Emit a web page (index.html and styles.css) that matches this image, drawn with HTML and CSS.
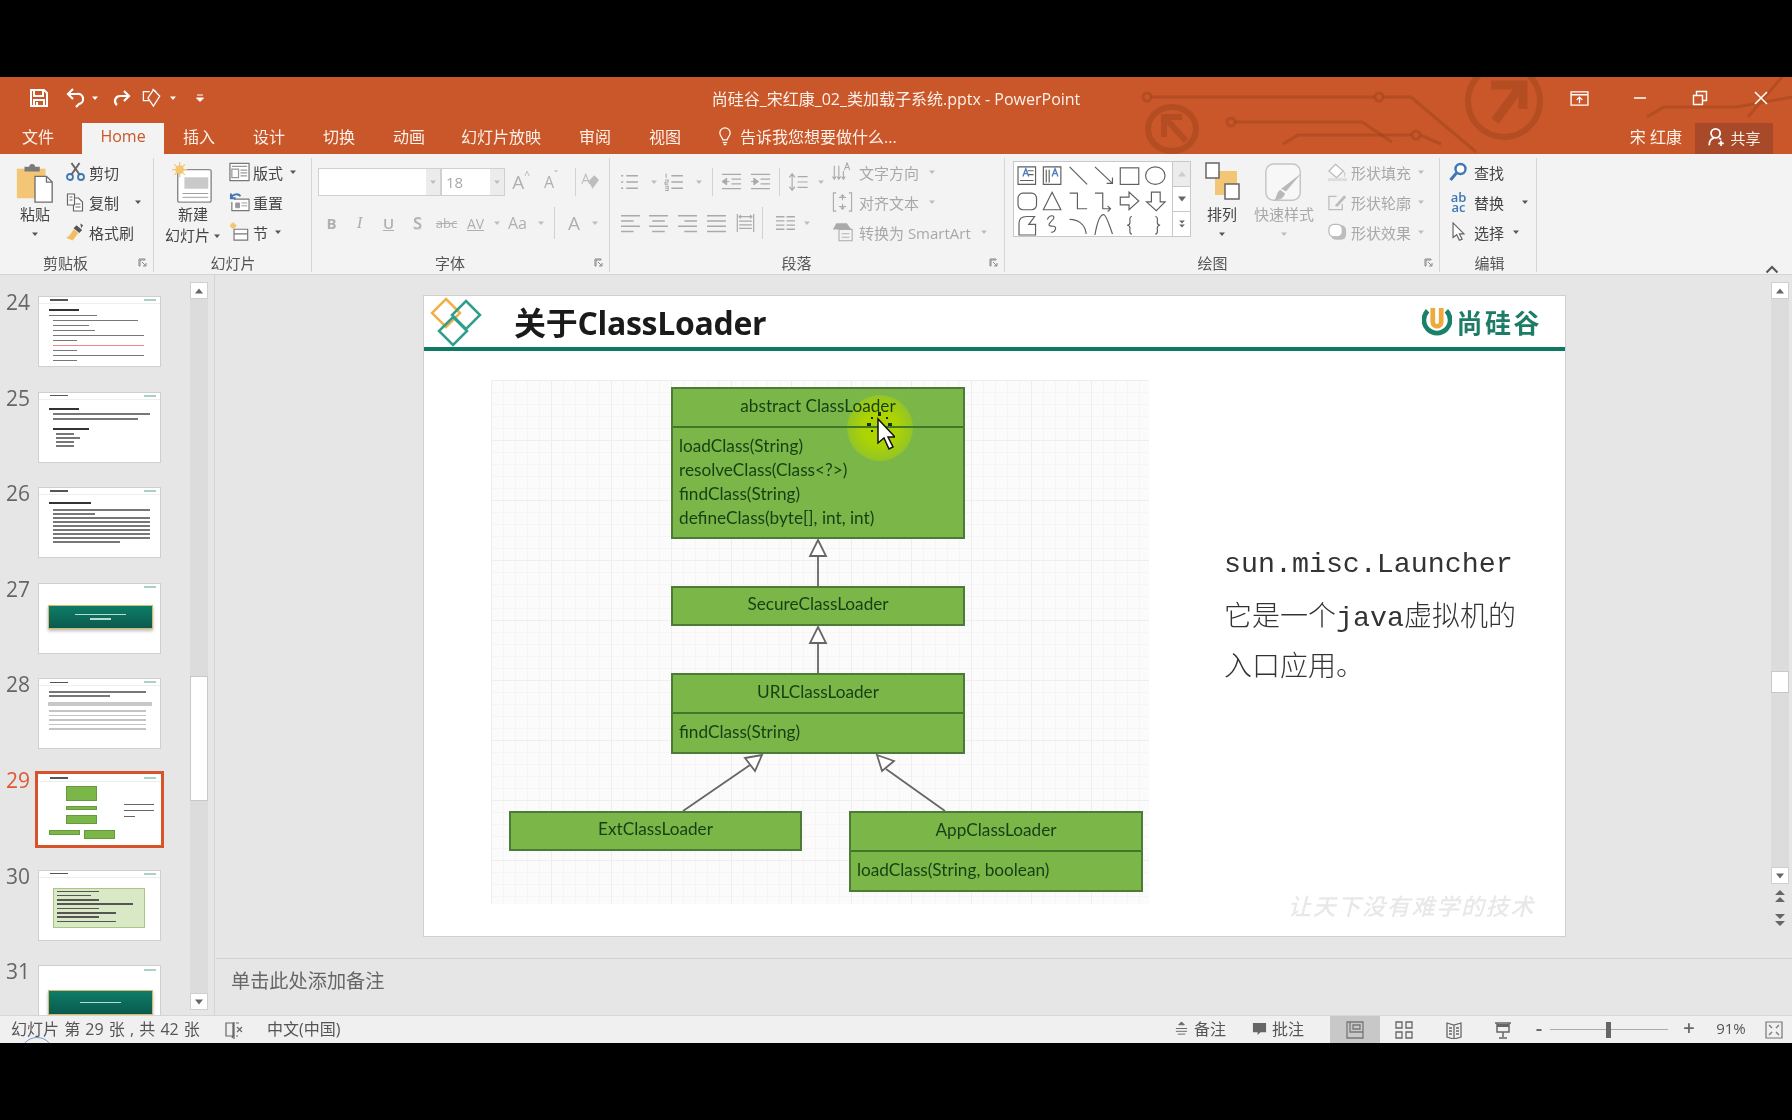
FILE: index.html
```html
<!DOCTYPE html>
<html lang="zh-CN">
<head>
<meta charset="utf-8">
<title>PowerPoint</title>
<link rel="stylesheet" href="styles.css">
</head>
<body>
<svg class="sprite" width="0" height="0">
  <defs>
    <symbol id="caret" viewBox="0 0 8 8"><path d="M1 2.5h6L4 6z" fill="currentColor"/></symbol>
    <symbol id="launch" viewBox="0 0 10 10"><path d="M1 1h6v1H2v6H1zM4 4l4 4M8 5v3H5" fill="none" stroke="currentColor"/></symbol>
    <symbol id="save" viewBox="0 0 20 20"><path d="M2 2h13l3 3v13H2zM5 2v6h9V2M5 18v-6h10v6M8 14v4" fill="none" stroke="currentColor" stroke-width="2"/></symbol>
    <symbol id="undo" viewBox="0 0 20 20"><path d="M7 1L2 6l5 5M3 6h8a5 5 0 0 1 2 10l-3 3" fill="none" stroke="currentColor" stroke-width="2.2"/></symbol>
    <symbol id="redo" viewBox="0 0 20 20"><path d="M13 3l5 5-5 5M17 8H9a5 5 0 0 0-3 9" fill="none" stroke="currentColor" stroke-width="2.2"/></symbol>
    <symbol id="touch" viewBox="0 0 24 22"><path d="M9 4H2v10h6M13 2l7 7-7 11-6-9zM12 1l4 3" fill="none" stroke="currentColor" stroke-width="1.4"/></symbol>
    <symbol id="custom" viewBox="0 0 10 10"><path d="M2 2h6M1.5 5h7L5 8.5z" fill="currentColor" stroke="currentColor"/></symbol>
    <symbol id="wdisplay" viewBox="0 0 20 16"><path d="M1 1h18v14H1zM1 4h18M10 13V7M7 9.500l3-3 3 3" fill="none" stroke="currentColor" stroke-width="1.400"/></symbol>
    <symbol id="wmin" viewBox="0 0 16 16"><path d="M2 8h12" stroke="currentColor" stroke-width="1.500"/></symbol>
    <symbol id="wrestore" viewBox="0 0 16 16"><path d="M1.500 5.500h9v9h-9zM4.500 5.500v-4h10v9h-4" fill="none" stroke="currentColor" stroke-width="1.400"/></symbol>
    <symbol id="wclose" viewBox="0 0 16 16"><path d="M2 2l12 12M14 2L2 14" stroke="currentColor" stroke-width="1.500"/></symbol>
    <symbol id="user" viewBox="0 0 20 22"><circle cx="9" cy="7" r="5" fill="none" stroke="currentColor" stroke-width="2"/><path d="M2 20c0-4 2-7 5-8M13 12l2 2M15 15v6M12 18h6" fill="none" stroke="currentColor" stroke-width="2"/></symbol>
    <symbol id="bulb" viewBox="0 0 16 22"><path d="M5.500 15c0-3-3.500-4-3.500-8a6 6 0 0 1 12 0c0 4-3.500 5-3.500 8zM5.500 18h5M6.500 20.500h3" fill="none" stroke="currentColor" stroke-width="1.400"/></symbol>
    <symbol id="paste" viewBox="0 0 42 44"><path d="M2 7h30v31H2z" fill="#f3c675"/><path d="M10 5h5a3 3 0 0 1 6 0h5v5H10z" fill="#7b7b7b"/><path d="M21 15h12l6 6v21H21z" fill="#fff" stroke="#6f6f6f" stroke-width="1.400"/><path d="M33 15v6h6" fill="none" stroke="#6f6f6f" stroke-width="1.400"/></symbol>
    <symbol id="cut" viewBox="0 0 20 20"><circle cx="4.500" cy="15" r="3" fill="none" stroke="#3f77b5" stroke-width="1.800"/><circle cx="15.500" cy="15" r="3" fill="none" stroke="#3f77b5" stroke-width="1.800"/><path d="M6 12.500L14 1M14 12.500L6 1" stroke="#666" stroke-width="2"/></symbol>
    <symbol id="copy" viewBox="0 0 20 20"><path d="M2 2h7v11H2zM9 6h4l4 4v9H8v-6" fill="#fff" stroke="#666" stroke-width="1.200"/><path d="M4 5h3M4 8h3M10 12h5M10 15h5" stroke="#666"/></symbol>
    <symbol id="brush" viewBox="0 0 22 20"><path d="M12 3l6 5-3 3-6-5z" fill="#555"/><path d="M9 7l5 4-6 8-7-3c3-1 5-4 8-9z" fill="#f1be62"/><path d="M16 1l3 2-2 3" fill="#555"/></symbol>
    <symbol id="newslide" viewBox="0 0 42 44"><rect x="5" y="8" width="35" height="34" rx="2" fill="#fff" stroke="#8a8a8a" stroke-width="1.500"/><path d="M12 16h25v12H12z" fill="#c9c9c9"/><path d="M10 33h27M10 37h27" stroke="#9a9a9a"/><circle cx="7" cy="8" r="4.500" fill="#f3c675"/><path d="M7 0v16M-1 8h16M1.500 2.500l11 11M12.500 2.500l-11 11" stroke="#f3c675" stroke-width="1.300"/></symbol>
    <symbol id="layout" viewBox="0 0 22 20"><path d="M1 1h20v18H1z" fill="#fff" stroke="#777" stroke-width="1.300"/><path d="M3 4h16M3 7h7v9H3zM12 8h7M12 11h7M12 14h7" fill="none" stroke="#999" stroke-width="1.300"/></symbol>
    <symbol id="reset" viewBox="0 0 22 20"><path d="M5 7h16v12H3V10" fill="#fff" stroke="#777" stroke-width="1.200"/><path d="M7 11h4v5H7zM13 11h6M13 14h6" fill="#999" stroke="#999"/><path d="M2 6c2-5 8-5 10-2M2 1v5h5" fill="none" stroke="#3f77b5" stroke-width="2"/></symbol>
    <symbol id="section" viewBox="0 0 22 22"><path d="M5 8h15v5H5zM5 13h15v7H5z" fill="#fff" stroke="#777" stroke-width="1.300"/><circle cx="4" cy="4" r="3" fill="#f3c675"/><path d="M4 0v8M0 4h8" stroke="#f3c675"/></symbol>
    <symbol id="eraser" viewBox="0 0 22 20"><path d="M9 9l6-6 5 5-7 9z" fill="#bdbdbd"/><path d="M2 12L6 2l4 10M3.500 8.500h5" fill="none" stroke="#bdbdbd" stroke-width="1.200"/></symbol>
    <symbol id="bullets" viewBox="0 0 20 18"><path d="M7 3h11M7 9h11M7 15h11M2 3h2M2 9h2M2 15h2" stroke="currentColor" stroke-width="1.500"/></symbol>
    <symbol id="numbers" viewBox="0 0 20 18"><path d="M7 3h11M7 9h11M7 15h11" stroke="currentColor" stroke-width="1.500"/><path d="M2 1v4M1 7h3v2H1v2h3M1 13h3v4H1M1 15h3" fill="none" stroke="currentColor"/></symbol>
    <symbol id="outdent" viewBox="0 0 22 18"><path d="M1 1h20M11 6h10M11 11h10M1 16h20" stroke="currentColor" stroke-width="1.300"/><path d="M1 8.500L6 5v7zM5 8.500h4" fill="currentColor" stroke="currentColor"/></symbol>
    <symbol id="indent" viewBox="0 0 22 18"><path d="M1 1h20M11 6h10M11 11h10M1 16h20" stroke="currentColor" stroke-width="1.300"/><path d="M9 8.500L4 5v7zM1 8.500h4" fill="currentColor" stroke="currentColor"/></symbol>
    <symbol id="spacing" viewBox="0 0 22 22"><path d="M4 2v18M1 6l3-4 3 4M1 16l3 4 3-4M10 5h11M10 11h11M10 17h11" fill="none" stroke="currentColor" stroke-width="1.300"/></symbol>
    <symbol id="aleft" viewBox="0 0 20 18"><path d="M1 2h18M1 7h12M1 12h18M1 17h12" stroke="currentColor" stroke-width="1.400"/></symbol>
    <symbol id="acenter" viewBox="0 0 20 18"><path d="M1 2h18M4 7h12M1 12h18M4 17h12" stroke="currentColor" stroke-width="1.400"/></symbol>
    <symbol id="aright" viewBox="0 0 20 18"><path d="M1 2h18M7 7h12M1 12h18M7 17h12" stroke="currentColor" stroke-width="1.400"/></symbol>
    <symbol id="ajust" viewBox="0 0 20 18"><path d="M1 2h18M1 7h18M1 12h18M1 17h18" stroke="currentColor" stroke-width="1.400"/></symbol>
    <symbol id="adist" viewBox="0 0 20 22"><path d="M1 1v20M19 1v20M3 4h14M5 2L3 4l2 2M15 2l2 2-2 2M3 9h14M3 13h14M3 17h14" fill="none" stroke="currentColor" stroke-width="1.300"/></symbol>
    <symbol id="cols" viewBox="0 0 20 16"><path d="M1 2h8M11 2h8M1 6h8M11 6h8M1 10h8M11 10h8M1 14h8M11 14h8" stroke="currentColor" stroke-width="1.300"/></symbol>
    <symbol id="tdir" viewBox="0 0 22 22"><path d="M2 4v14M7 4v14M12 10v8M0 16l2 3 2-3M5 16l2 3 2-3M10 16l2 3 2-3M13 9l3-8 3 8M14 6h4" fill="none" stroke="currentColor" stroke-width="1.200"/></symbol>
    <symbol id="talign" viewBox="0 0 22 22"><path d="M4 1H1v20h3M18 1h3v20h-3M7 6h8M7 16h8M11 3v6M9 5l2-2 2 2M11 13v6M9 17l2 2 2-2" fill="none" stroke="currentColor" stroke-width="1.200"/></symbol>
    <symbol id="smart" viewBox="0 0 24 22"><path d="M1 8l4-7h12l5 7z" fill="currentColor"/><path d="M8 8h15v13H8z" fill="#f3f3f3" stroke="currentColor" stroke-width="1.200"/><path d="M11 13h9M11 17h9" stroke="currentColor"/></symbol>
    <symbol id="arrange" viewBox="0 0 36 38"><path d="M11 9h22v24H11z" fill="#f3c675"/><path d="M2 1h13v15H2zM21 22h14v15H21z" fill="#fff" stroke="#666" stroke-width="1.500"/></symbol>
    <symbol id="quick" viewBox="0 0 40 44"><rect x="1" y="2" width="36" height="38" rx="8" fill="#f7f7f7" stroke="#c4c4c4" stroke-width="1.500"/><path d="M38 12L22 31l-5-3z" fill="#b9b9b9"/><path d="M16 29l5 4c-1 5-6 7-11 7 2-2 2-8 6-11z" fill="#b9b9b9"/></symbol>
    <symbol id="sfill" viewBox="0 0 22 20"><path d="M2 9l7-7 8 7-7 7z" fill="#fff" stroke="#bbb" stroke-width="1.300"/><path d="M16 9c3 0 3 5 2 6" stroke="#bbb" fill="none"/><path d="M1 18h20" stroke="#ddd" stroke-width="3"/></symbol>
    <symbol id="sline" viewBox="0 0 22 20"><path d="M10 4H2v14h14v-6" fill="none" stroke="#bbb" stroke-width="1.300"/><path d="M8 14l10-11 2 2-9 10z" fill="#bbb"/></symbol>
    <symbol id="seffect" viewBox="0 0 22 20"><rect x="4" y="3" width="16" height="15" rx="5" fill="#bdbdbd"/><rect x="2" y="2" width="14" height="13" rx="5" fill="#fff" stroke="#bbb" stroke-width="1.300"/></symbol>
    <symbol id="find" viewBox="0 0 20 20"><circle cx="12" cy="7" r="5" fill="#fff" stroke="#3f77b5" stroke-width="2.400"/><path d="M8 11l-6 7" stroke="#3f77b5" stroke-width="3"/></symbol>
    <symbol id="arrow" viewBox="0 0 18 22"><path d="M3 1v16l4-3 3 6 3-1-3-6h5z" fill="#fff" stroke="#666" stroke-width="1.300"/></symbol>
    <symbol id="up" viewBox="0 0 10 8"><path d="M1 6.500h8L5 1.500z" fill="currentColor"/></symbol>
    <symbol id="down" viewBox="0 0 10 8"><path d="M1 1.500h8L5 6.500z" fill="currentColor"/></symbol>
    <symbol id="dbup" viewBox="0 0 12 14"><path d="M1 6h10L6 1zM1 13h10L6 8z" fill="currentColor"/></symbol>
    <symbol id="dbdown" viewBox="0 0 12 14"><path d="M1 1h10L6 6zM1 8h10L6 13z" fill="currentColor"/></symbol>
  </defs>
</svg>

<div class="video-bar"></div>
<div class="app">
  <header class="chrome">
    <svg class="circuit" viewBox="0 0 1792 77" width="1792" height="77">
      <g fill="none" stroke="#8f3d15" stroke-opacity=".36" stroke-width="3">
        <circle cx="1147" cy="20" r="4"/><path d="M1151 20h224M1383 20h28l65 55"/><circle cx="1379" cy="20" r="4"/>
        <circle cx="1231" cy="45" r="4"/><path d="M1235 45h127l30 20"/>
        <path d="M1283 67l15-9h114M1420 58l21 9"/><circle cx="1416" cy="58" r="4"/>
        <ellipse cx="1172" cy="52" rx="24" ry="22" stroke-width="6"/><path d="M1186 64l-20-22M1164 60V40h18" stroke-width="6"/>
        <circle cx="1504" cy="24" r="36" stroke-width="6"/><path d="M1495 44l26-35M1491 8h32v24" stroke-width="9"/>
        <path d="M1647 40l17-10h73M1748 40l34-40M1737 30l55-10"/>
      </g>
    </svg>
    <div class="titlebar">
      <div class="qat">
        <svg class="qi save"><use href="#save"/></svg>
        <svg class="qi undo"><use href="#undo"/></svg>
        <svg class="car"><use href="#caret"/></svg>
        <svg class="qi redo"><use href="#redo"/></svg>
        <svg class="qi touch"><use href="#touch"/></svg>
        <svg class="car"><use href="#caret"/></svg>
        <svg class="qi custom"><use href="#custom"/></svg>
      </div>
      <div class="doc-title">尚硅谷_宋红康_02_类加载子系统.pptx - PowerPoint</div>
      <div class="winbtns">
        <span class="winbtn"><svg class="wdisplay"><use href="#wdisplay"/></svg></span>
        <span class="winbtn"><svg class="wic"><use href="#wmin"/></svg></span>
        <span class="winbtn"><svg class="wic"><use href="#wrestore"/></svg></span>
        <span class="winbtn"><svg class="wic"><use href="#wclose"/></svg></span>
      </div>
    </div>
    <nav class="tabs">
      <span class="tab t-file">文件</span>
      <span class="tab t-home">Home</span>
      <span class="tab t70">插入</span>
      <span class="tab t70">设计</span>
      <span class="tab t70">切换</span>
      <span class="tab t70">动画</span>
      <span class="tab t114">幻灯片放映</span>
      <span class="tab t74">审阅</span>
      <span class="tab t66">视图</span>
      <span class="tell"><svg class="bulb"><use href="#bulb"/></svg>告诉我您想要做什么...</span>
      <span class="account">宋 红康</span>
      <span class="share"><svg class="usr"><use href="#user"/></svg>共享</span>
    </nav>
  </header>

  <section class="ribbon">
    <div class="group g-clip">
      <div class="gbody">
        <div class="big b-paste"><svg class="bigic"><use href="#paste"/></svg><span class="bl">粘贴</span><svg class="car dk"><use href="#caret"/></svg></div>
        <div class="col">
          <div class="rb"><svg class="ic"><use href="#cut"/></svg>剪切</div>
          <div class="rb"><svg class="ic"><use href="#copy"/></svg>复制<svg class="car dk m10"><use href="#caret"/></svg></div>
          <div class="rb"><svg class="ic"><use href="#brush"/></svg>格式刷</div>
        </div>
      </div>
      <div class="glabel"><span class="gname">剪贴板</span><svg class="launch"><use href="#launch"/></svg></div>
    </div>

    <div class="group g-slides">
      <div class="gbody">
        <div class="big b-new"><svg class="bigic"><use href="#newslide"/></svg><span class="bl">新建</span><span class="bl">幻灯片<svg class="car dk"><use href="#caret"/></svg></span></div>
        <div class="col">
          <div class="rb"><svg class="ic"><use href="#layout"/></svg>版式<svg class="car dk"><use href="#caret"/></svg></div>
          <div class="rb"><svg class="ic"><use href="#reset"/></svg>重置</div>
          <div class="rb"><svg class="ic"><use href="#section"/></svg>节<svg class="car dk"><use href="#caret"/></svg></div>
        </div>
      </div>
      <div class="glabel nolaunch"><span class="gname">幻灯片</span></div>
    </div>

    <div class="group g-font">
      <div class="gbody stack off">
        <div class="frow">
          <span class="combo cname"><i class="drop"><svg class="car"><use href="#caret"/></svg></i></span>
          <span class="combo csize"><b class="cval">18</b><i class="drop"><svg class="car"><use href="#caret"/></svg></i></span>
          <span class="cell w32 ta">A<sup>^</sup></span>
          <span class="cell w28 ta sm">A<sup>ˇ</sup></span>
          <i class="sep m-sep1"></i>
          <span class="cell w28"><svg class="ic"><use href="#eraser"/></svg></span>
        </div>
        <div class="frow gapped">
          <span class="cell w27 fb">B</span>
          <span class="cell w29 fi">I</span>
          <span class="cell w29 fu">U</span>
          <span class="cell w29 fs">S</span>
          <span class="cell w29 fx">abc</span>
          <span class="cell w29 fa">AV</span>
          <svg class="car"><use href="#caret"/></svg>
          <span class="cell w33 fa2">Aa</span>
          <svg class="car"><use href="#caret"/></svg>
          <i class="sep tall m-sep2"></i>
          <span class="cell w28 fa3">A</span>
          <svg class="car"><use href="#caret"/></svg>
        </div>
      </div>
      <div class="glabel"><span class="gname">字体</span><svg class="launch"><use href="#launch"/></svg></div>
    </div>

    <div class="group g-para">
      <div class="gbody off">
        <div class="stack para-left">
          <div class="frow">
            <span class="cell w26"><svg class="ic"><use href="#bullets"/></svg></span>
            <span class="cell w20"><svg class="car"><use href="#caret"/></svg></span>
            <span class="cell w24"><svg class="ic"><use href="#numbers"/></svg></span>
            <span class="cell w22"><svg class="car"><use href="#caret"/></svg></span>
            <i class="sep m-sep3"></i>
            <span class="cell w28"><svg class="ic"><use href="#outdent"/></svg></span>
            <span class="cell w30"><svg class="ic"><use href="#indent"/></svg></span>
            <i class="sep m-sep3"></i>
            <span class="cell w28"><svg class="ic"><use href="#spacing"/></svg></span>
            <span class="cell w14"><svg class="car"><use href="#caret"/></svg></span>
          </div>
          <div class="frow gapped">
            <span class="cell w28"><svg class="ic"><use href="#aleft"/></svg></span>
            <span class="cell w29"><svg class="ic"><use href="#acenter"/></svg></span>
            <span class="cell w29"><svg class="ic"><use href="#aright"/></svg></span>
            <span class="cell w29"><svg class="ic"><use href="#ajust"/></svg></span>
            <span class="cell w29"><svg class="ic"><use href="#adist"/></svg></span>
            <i class="sep tall m-sep4"></i>
            <span class="cell w26"><svg class="ic"><use href="#cols"/></svg></span>
            <span class="cell w14"><svg class="car"><use href="#caret"/></svg></span>
          </div>
        </div>
        <div class="col para-right">
          <div class="rb"><svg class="ic"><use href="#tdir"/></svg>文字方向<svg class="car"><use href="#caret"/></svg></div>
          <div class="rb"><svg class="ic"><use href="#talign"/></svg>对齐文本<svg class="car"><use href="#caret"/></svg></div>
          <div class="rb"><svg class="ic"><use href="#smart"/></svg>转换为 SmartArt<svg class="car"><use href="#caret"/></svg></div>
        </div>
      </div>
      <div class="glabel"><span class="gname">段落</span><svg class="launch"><use href="#launch"/></svg></div>
    </div>

    <div class="group g-draw">
      <div class="gbody">
        <div class="gallery">
          <svg class="shapes" viewBox="0 0 160 76" width="160" height="76">
            <g fill="none" stroke="#5f5f5f" stroke-width="1.200">
              <path d="M3 5h18v18H3zM13 9h6M13 13h6M5 19h14"/>
              <path d="M29 5h18v18H29zM32 8v13M35 8v13"/>
              <path d="M56 5l18 18M82 5l18 17M100 16v6h-6"/>
              <rect x="108" y="6" width="19" height="17"/>
              <ellipse cx="144" cy="14" rx="10" ry="9"/>
              <rect x="3" y="32" width="19" height="17" rx="5"/>
              <path d="M38 31l9 18H29z"/>
              <path d="M56 32h8v16h10M82 32h8v16h8M95 45l3 3-3 3"/>
              <path d="M108 36h9v-5l10 9-10 9v-5h-9zM140 31h9v10h5l-9 9-10-9h5z"/>
              <g transform="translate(0 1)">
                <path d="M4 62c0-5 3-7 8-7h8l-6 8 7 0v11H4z"/>
                <path d="M33 58c3-6 9-4 6 0-4 4-7 7 0 7 5 0 2 7-2 6"/>
                <path d="M56 58c9 0 16 5 17 15M82 74c3-18 7-21 9-21s5 8 9 20"/>
                <path d="M115 56c-3 0-2 4-2 6s-1 3-3 3c2 0 3 1 3 3s-1 6 2 6M139 56c3 0 2 4 2 6s1 3 3 3c-2 0-3 1-3 3s1 6-2 6" transform="translate(5 -1)"/>
              </g>
            </g>
            <path d="M8 15l3-8 3 8M9 12h4M38 15l3-8 3 8M39 12h4" fill="none" stroke="#4b7fc0" stroke-width="1.400"/>
          </svg>
          <div class="gscroll">
            <span class="gs gs-off"><svg class="tiny"><use href="#up"/></svg></span>
            <span class="gs"><svg class="tiny"><use href="#down"/></svg></span>
            <span class="gs"><svg class="tiny"><use href="#dbdown"/></svg></span>
          </div>
        </div>
        <div class="big b-arr"><svg class="bigic"><use href="#arrange"/></svg><span class="bl">排列</span><svg class="car dk"><use href="#caret"/></svg></div>
        <div class="big b-qs off"><svg class="bigic"><use href="#quick"/></svg><span class="bl">快速样式</span><svg class="car"><use href="#caret"/></svg></div>
        <div class="col off">
          <div class="rb"><svg class="ic"><use href="#sfill"/></svg>形状填充<svg class="car"><use href="#caret"/></svg></div>
          <div class="rb"><svg class="ic"><use href="#sline"/></svg>形状轮廓<svg class="car"><use href="#caret"/></svg></div>
          <div class="rb"><svg class="ic"><use href="#seffect"/></svg>形状效果<svg class="car"><use href="#caret"/></svg></div>
        </div>
      </div>
      <div class="glabel"><span class="gname">绘图</span><svg class="launch"><use href="#launch"/></svg></div>
    </div>

    <div class="group g-edit">
      <div class="gbody">
        <div class="col">
          <div class="rb"><svg class="ic"><use href="#find"/></svg>查找</div>
          <div class="rb"><span class="abac">ab<br>ac</span>替换<svg class="car dk m10"><use href="#caret"/></svg></div>
          <div class="rb"><svg class="ic"><use href="#arrow"/></svg>选择<svg class="car dk"><use href="#caret"/></svg></div>
        </div>
      </div>
      <div class="glabel nolaunch"><span class="gname">编辑</span></div>
    </div>
    <svg class="collapse" viewBox="0 0 14 9"><path d="M1.500 7.500L7 2l5.500 5.500" fill="none" stroke="#555" stroke-width="2"/></svg>
  </section>

  <section class="workspace">
    <aside class="panel">
      <div class="thumbs">
        <div class="trow"><span class="tnum">24</span>
          <div class="thumb"><div class="thead"><i class="tt"></i><i class="tlogo"></i></div>
            <i class="bar hd w25 ml8"></i><i class="bar w40 ml8"></i><i class="bar w70 ml12"></i><i class="bar w30 ml12"></i><i class="bar w35 ml12"></i><i class="bar w75 ml12"></i><i class="bar w20 ml12"></i><i class="bar red w75 ml12"></i><i class="bar w20 ml12"></i><i class="bar w75 ml12"></i><i class="bar w20 ml12"></i>
          </div></div>
        <div class="trow"><span class="tnum">25</span>
          <div class="thumb"><div class="thead"><i class="tt"></i><i class="tlogo"></i></div>
            <i class="bar hd w25 ml8 mt4"></i><i class="bar w80 ml12"></i><i class="bar w70 ml12 gp"></i><i class="bar hd w30 ml12"></i><i class="bar w15 ml14 tight"></i><i class="bar w20 ml14 tight"></i><i class="bar w15 ml14 tight"></i><i class="bar w15 ml14 tight"></i>
          </div></div>
        <div class="trow"><span class="tnum">26</span>
          <div class="thumb"><div class="thead"><i class="tt"></i><i class="tlogo"></i></div>
            <i class="bar hd w35 ml8 mt2 wide"></i><i class="bar w80 ml12 tight"></i><i class="bar w35 ml12 tight"></i><i class="bar w80 ml12 tight"></i><i class="bar w80 ml12 tight"></i><i class="bar w80 ml12 tight"></i><i class="bar w80 ml12 tight"></i><i class="bar w80 ml12 tight"></i><i class="bar w80 ml12 tight"></i><i class="bar w55 ml12 tight"></i>
          </div></div>
        <div class="trow"><span class="tnum">27</span>
          <div class="thumb"><div class="thead plain"><i class="tt off-t"></i><i class="tlogo"></i></div>
            <div class="teal"><i class="tb w50"></i><i class="tb w20"></i></div>
          </div></div>
        <div class="trow"><span class="tnum">28</span>
          <div class="thumb"><div class="thead"><i class="tt"></i><i class="tlogo"></i></div>
            <i class="bar w80 ml8 tight"></i><i class="bar w50 ml8 tight"></i><i class="tbl-head"></i><i class="bar lt w80 ml8"></i><i class="bar lt w80 ml8"></i><i class="bar lt w80 ml8"></i><i class="bar lt w80 ml8"></i><i class="bar lt w80 ml8"></i>
          </div></div>
        <div class="trow sel"><span class="tnum">29</span>
          <div class="thumb"><div class="thead"><i class="tt"></i><i class="tlogo"></i></div>
            <div class="mini">
              <i class="m m1"></i><i class="m m2"></i><i class="m m3"></i><i class="m m4"></i><i class="m m5"></i>
              <i class="mt-l l1"></i><i class="mt-l l2"></i><i class="mt-l l3"></i>
            </div>
          </div></div>
        <div class="trow"><span class="tnum">30</span>
          <div class="thumb"><div class="thead"><i class="tt"></i><i class="tlogo"></i></div>
            <div class="gtable"><i class="bar w50"></i><i class="bar w40"></i><i class="bar w50"></i><i class="bar w90"></i><i class="bar w50"></i><i class="bar w70"></i><i class="bar w50"></i><i class="bar w70"></i></div>
          </div></div>
        <div class="trow"><span class="tnum">31</span>
          <div class="thumb"><div class="thead plain"><i class="tt off-t"></i><i class="tlogo"></i></div>
            <div class="teal t31"><i class="tb w40"></i></div>
          </div></div>
      </div>
      <div class="pscroll">
        <span class="sbtn"><svg class="tiny"><use href="#up"/></svg></span>
        <div class="ptrack"><span class="pthumb"></span></div>
        <span class="sbtn"><svg class="tiny"><use href="#down"/></svg></span>
      </div>
    </aside>

    <main class="main">
      <div class="editor">
        <div class="canvas">
          <article class="slide">
            <div class="slide-head">
              <svg class="diamonds" viewBox="0 0 54 52" width="54" height="52">
                <g fill="none" stroke-width="2.500">
                  <path d="M17 4l14 14-14 14L3 18z" stroke="#f0b04a"/>
                  <path d="M37 6l14 14-14 14-14-14z" stroke="#2f9f8c"/>
                  <path d="M24 22l14 14-14 14-14-14z" stroke="#2f9f8c"/>
                </g>
              </svg>
              <h1 class="slide-title">关于ClassLoader</h1>
              <div class="brand">
                <svg class="brand-mark" viewBox="0 0 32 34" width="32" height="34"><path d="M6 5A14 14 0 1 0 26 5" fill="none" stroke="#17816a" stroke-width="5"/><path d="M11.500 2v15a4.500 4.500 0 0 0 9 0V2" fill="none" stroke="#f2a93b" stroke-width="5"/></svg>
                <span class="brand-name">尚硅谷</span>
              </div>
            </div>
            <div class="slide-body">
              <div class="diagram">
                <div class="node n-abs">
                  <div class="nhead h41">abstract ClassLoader</div>
                  <div class="nbody"><p>loadClass(String)</p><p>resolveClass(Class&lt;?&gt;)</p><p>findClass(String)</p><p>defineClass(byte[], int, int)</p></div>
                </div>
                <div class="node n-sec"><div class="nhead">SecureClassLoader</div></div>
                <div class="node n-url">
                  <div class="nhead h41">URLClassLoader</div>
                  <div class="nbody one"><p>findClass(String)</p></div>
                </div>
                <div class="node n-ext"><div class="nhead">ExtClassLoader</div></div>
                <div class="node n-app">
                  <div class="nhead h41">AppClassLoader</div>
                  <div class="nbody one"><p>loadClass(String, boolean)</p></div>
                </div>
                <svg class="links" viewBox="0 0 658 524" width="658" height="524">
                  <g fill="#fff" stroke="#666" stroke-width="1.800">
                    <path d="M327 176v30M327 262v31M192 431l67-46M454 431l-59-42"/>
                    <path d="M327 160l8 16h-16zM327 247l8 16h-16zM271 375l-7 16-10-13zM386 375l17 6-12 10z"/>
                  </g>
                </svg>
                <div class="hilite"></div>
                <svg class="cursor" viewBox="0 0 30 44" width="30" height="44">
                  <g fill="#1c2a22"><rect x="13" y="2" width="3" height="4"/><rect x="13" y="22" width="3" height="4"/><rect x="2" y="13" width="4" height="3"/><rect x="23" y="13" width="4" height="3"/><rect x="6" y="7" width="2" height="2"/><rect x="21" y="7" width="2" height="2"/><rect x="6" y="20" width="2" height="2"/></g>
                  <path d="M13 9v24l6-5 5 11 4-2-5-10h7z" fill="#fff" stroke="#111" stroke-width="1.500"/>
                </svg>
              </div>
              <div class="slide-text">
                <p class="tline mono">sun.misc.Launcher</p>
                <p class="tline">它是一个<span class="mono">java</span>虚拟机的</p>
                <p class="tline">入口应用。</p>
              </div>
            </div>
            <div class="watermark">让天下没有难学的技术</div>
          </article>
        </div>
        <div class="vscroll">
          <span class="sbtn"><svg class="tiny"><use href="#up"/></svg></span>
          <div class="vtrack"><span class="vthumb"></span></div>
          <span class="sbtn"><svg class="tiny"><use href="#down"/></svg></span>
          <span class="pgbtn"><svg class="dbl"><use href="#dbup"/></svg></span>
          <span class="pgbtn"><svg class="dbl"><use href="#dbdown"/></svg></span>
        </div>
      </div>
      <div class="notes">单击此处添加备注</div>
    </main>
  </section>

  <footer class="status">
    <span class="st-count">幻灯片 第 29 张 , 共 42 张</span>
    <svg class="st-book" viewBox="0 0 20 20"><path d="M9 3H2v13h7zM9 16l-1 2M12 3h3M12 16h2M10 2v17" fill="none" stroke="#666" stroke-width="1.200"/><path d="M13 7l5 5M18 7l-5 5" stroke="#666" stroke-width="1.200"/></svg>
    <span class="st-lang">中文(中国)</span>
    <span class="st-right">
      <span class="st-btn st-notes"><svg class="st-ic" viewBox="0 0 16 16"><path d="M8 1l3 3H5zM2 8h12M2 11h12M4 14h8" fill="#666" stroke="#666"/></svg>备注</span>
      <span class="st-btn st-comm"><svg class="st-ic" viewBox="0 0 16 16"><path d="M1 2h14v10H9l-3 3v-3H1z" fill="#666"/></svg>批注</span>
      <span class="vw active"><svg class="vw-ic" viewBox="0 0 18 18"><path d="M1 1h16v16H1zM4 1v10h13M7 4h7v4H7z" fill="none" stroke="#777" stroke-width="1.300"/></svg></span>
      <span class="vw"><svg class="vw-ic" viewBox="0 0 18 18"><path d="M1 1h6v6H1zM11 1h6v6h-6zM1 11h6v6H1zM11 11h6v6h-6z" fill="none" stroke="#666" stroke-width="1.300"/></svg></span>
      <span class="vw"><svg class="vw-ic" viewBox="0 0 18 18"><path d="M2 2l7 2 7-2v14l-7 2-7-2zM9 4v14M4 7h3M4 10h3M4 13h3M11 7h3M11 10h3M11 13h3" fill="none" stroke="#666" stroke-width="1.300"/></svg></span>
      <span class="vw"><svg class="vw-ic" viewBox="0 0 18 18"><path d="M1 2h16M3 2v9h12V2M9 11v5M5 17h8" fill="none" stroke="#666" stroke-width="1.500"/><path d="M3 3h12v3H3z" fill="#666"/></svg></span>
      <span class="zm minus">-</span>
      <span class="slider"><i class="knob"></i></span>
      <span class="zm plus">+</span>
      <span class="zoomv">91%</span>
      <svg class="fit" viewBox="0 0 18 18"><path d="M1 1h16v16H1z" fill="none" stroke="#777" stroke-width="1.200"/><path d="M4 4l3 3M14 4l-3 3M4 14l3-3M14 14l-3-3" stroke="#777" stroke-width="1.300"/></svg>
    </span>
    <i class="click-ring"></i>
  </footer>
</div>
</body>
</html>
```
FILE: styles.css
```css
* { box-sizing: border-box; }
html, body { margin: 0; height: 100%; overflow: hidden; background: #000; }
body { font-family: "Open Sans", "Noto Sans CJK SC", sans-serif; color: #444; width: 1792px; height: 1120px; }
svg { display: block; flex: none; }
p, h1 { margin: 0; }
i { font-style: normal; }
.sprite { position: absolute; }
.video-bar { height: 77px; background: #000; }
.app { height: 965px; display: flex; flex-direction: column; background: #e6e6e6; position: relative; filter: blur(.45px); }

/* title + tabs */
.chrome { height: 77px; background: #c9572a; position: relative; color: #fdf1ea; overflow: hidden; flex: none; }
.circuit { position: absolute; left: 0; top: 0; }
.titlebar { height: 46px; display: grid; grid-template-columns: 1fr auto 1fr; align-items: center; position: relative; padding-bottom: 4px; }
.qat { display: flex; align-items: center; padding-left: 29px; color: #fff; }
.qi { width: 20px; height: 20px; }
.qi.undo { margin-left: 17px; width: 20px; }
.qi.redo { margin-left: 12px; }
.qi.touch { margin-left: 10px; width: 23px; }
.qi.custom { margin-left: 18px; width: 10px; height: 10px; }
.car { width: 8px; height: 8px; margin-left: 3px; color: #bdbdbd; display: inline-block; }
.qat .car { color: #fff; margin-left: 5px; }
.car.dk { color: #555; }
.car.m10 { margin-left: 12px; }
.doc-title { font-size: 16px; white-space: nowrap; }
.winbtns { display: flex; justify-content: flex-end; padding-right: 1px; }
.winbtn { width: 60.500px; height: 40px; display: flex; align-items: center; justify-content: center; color: #fff; }
.wic { width: 16px; height: 16px; }
.wdisplay { width: 19px; height: 15px; }
.tabs { height: 31px; display: flex; align-items: stretch; position: relative; font-size: 16px; }
.tab { display: flex; align-items: center; justify-content: center; padding-bottom: 5px; }
.t-file { width: 76px; margin-right: 6px; }
.t-home { width: 82px; background: #f3f3f3; color: #c9572a; }
.t70 { width: 70px; }
.t114 { width: 114px; }
.t74 { width: 74px; }
.t66 { width: 66px; }
.tell { display: flex; align-items: center; margin-left: 20px; gap: 8px; font-size: 16px; padding-bottom: 5px; }
.bulb { width: 14px; height: 19px; color: #fff; }
.account { margin-left: auto; display: flex; align-items: center; font-size: 16px; padding-bottom: 5px; }
.share { width: 78px; margin: 0 19px 0 13px; background: #a8492a; display: flex; align-items: center; justify-content: center; gap: 4px; font-size: 15px; padding-bottom: 3px; }
.usr { width: 19px; height: 20px; color: #fff; }

/* ribbon */
.ribbon { height: 121px; flex: none; background: #f3f3f3; display: flex; padding-top: 4px; border-bottom: 1px solid #d4d4d4; font-size: 15px; position: relative; }
.group { height: 114px; border-right: 1px solid #d6d6d6; display: flex; flex-direction: column; flex: none; }
.g-clip { width: 154px; padding-left: 5px; }
.g-slides { width: 158px; padding-left: 6px; }
.g-font { width: 298px; padding-left: 6px; }
.g-para { width: 395px; padding-left: 6px; }
.g-draw { width: 435px; padding-left: 8px; }
.g-edit { width: 97px; padding-left: 8px; }
.gbody { height: 90px; display: flex; flex: none; margin-top: -1px; }
.glabel { margin-top: 7px; height: 18px; line-height: 18px; display: flex; align-items: center; font-size: 15px; color: #555; padding-right: 5px; }
.gname { flex: 1; text-align: center; padding-right: 12px; }
.nolaunch .gname { padding-right: 0; }
.launch { width: 10px; height: 10px; color: #888; }
.col { display: flex; flex-direction: column; flex: none; }
.rb { height: 30px; display: flex; align-items: center; gap: 3px; white-space: nowrap; color: #444; }
.ic { width: 21px; height: 20px; color: #aaa; }
.big { display: flex; flex-direction: column; align-items: center; flex: none; padding-top: 5px; }
.bigic { width: 42px; height: 42px; }
.bl { line-height: 21px; height: 21px; display: flex; align-items: center; white-space: nowrap; color: #444; }
.big .car { margin: 5px 0 0; }
.bl .car { margin: 0 0 0 3px; }
.b-paste { width: 60px; }
.b-new { width: 66px; }
.g-slides .col { margin-left: 3px; }
.off, .off .rb, .off .bl { color: #a8a8a8; }
.stack { display: flex; flex-direction: column; padding-top: 11px; flex: none; }
.frow { height: 28px; display: flex; align-items: center; }
.frow.gapped { margin-top: 13px; }
.combo { height: 28px; background: #fff; border: 1px solid #d0d0d0; display: flex; justify-content: flex-end; }
.cname { width: 123px; }
.csize { width: 64px; justify-content: space-between; }
.cval { font-weight: 400; font-size: 15px; padding-left: 4px; color: #aaa; line-height: 26px; }
.drop { width: 14px; background: #ececec; display: flex; align-items: center; justify-content: center; }
.drop .car { margin: 0; }
.cell { display: flex; align-items: center; justify-content: center; flex: none; height: 28px; color: #b0b0b0; }
.w14 { width: 14px; } .w20 { width: 20px; } .w22 { width: 22px; } .w24 { width: 24px; } .w26 { width: 26px; } .w27 { width: 27px; }
.w28 { width: 28px; } .w29 { width: 29px; } .w30 { width: 30px; } .w32 { width: 32px; } .w33 { width: 33px; }
.ta { font-size: 19px; align-items: flex-start; line-height: 28px; }
.ta.sm { font-size: 16px; }
.ta sup { font-size: 10px; line-height: 14px; }
.sep { width: 1px; height: 28px; background: #d2d2d2; flex: none; }
.sep.tall { height: 32px; }
.m-sep1 { margin: 0 0 0 10px; }
.m-sep2 { margin: 0 5px 0 9px; }
.m-sep3 { margin: 0 4px; }
.m-sep4 { margin: 0 9px 0 2px; }
.fb { font-weight: 700; font-size: 15px; }
.fi { font-style: italic; font-family: "Liberation Serif", serif; font-size: 17px; }
.fu { text-decoration: underline; font-weight: 600; font-size: 15px; }
.fs { font-size: 16px; font-weight: 600; text-shadow: 1px 1px 0 #ddd; }
.fx { font-size: 13px; text-decoration: line-through; }
.fa { font-size: 14px; text-decoration: underline; }
.fa2 { font-size: 16px; }
.fa3 { font-size: 19px; }
.para-left { width: 216px; }
.para-right .rb { gap: 6px; }
.gallery { width: 178px; height: 76px; margin-top: 4px; display: flex; background: #fff; border: 1px solid #c8c8c8; flex: none; margin-right: 3px; }
.shapes { width: 158px; height: 74px; }
.gscroll { flex: 1; display: flex; flex-direction: column; border-left: 1px solid #c8c8c8; }
.gs { flex: 1; display: flex; align-items: center; justify-content: center; border-bottom: 1px solid #c8c8c8; color: #666; }
.gs:last-child { border-bottom: 0; }
.gs-off { background: #ececec; color: #ccc; }
.tiny { width: 10px; height: 8px; }
.b-arr { width: 56px; }
.b-arr .bigic { width: 36px; height: 38px; }
.b-qs { width: 68px; }
.b-qs .bigic { width: 40px; height: 42px; }
.b-arr .bl { margin-top: 4px; }
.g-draw .col.off { margin-left: 9px; }
.g-edit .rb { gap: 5px; }
.abac { width: 21px; font: 600 13px/10px "Open Sans", sans-serif; color: #3f77b5; text-align: center; }
.collapse { width: 14px; height: 9px; margin: 107px 0 0 228px; }

/* work area */
.workspace { height: 740px; flex: none; display: flex; }
.panel { width: 215px; border-right: 1px solid #d4d4d4; display: flex; flex: none; overflow: hidden; padding-right: 6px; }
.thumbs { width: 190px; flex: none; padding-top: 21px; }
.trow { height: 95.600px; display: flex; }
.tnum { width: 38px; padding-left: 6px; font-size: 21px; line-height: 28px; color: #666; margin-top: -8px; }
.sel .tnum { color: #dc5a30; }
.thumb { width: 123px; height: 71px; background: #fff; border: 1px solid #cfcfcf; display: flex; flex-direction: column; flex: none; overflow: hidden; }
.sel .thumb { box-shadow: 0 0 0 3px #d9532a; border-color: #fff; }
.thead { height: 7px; margin-bottom: 5px; display: flex; justify-content: space-between; align-items: center; padding: 0 4px 0 11px; border-bottom: 1px solid #eee; flex: none; }
.thead.plain { border: 0; }
.tt { width: 18px; height: 1.500px; background: #555; }
.off-t { background: transparent; }
.tlogo { width: 12px; height: 2px; background: #a5d4c6; }
.bar { display: block; height: 1.500px; background: #777; margin-bottom: 3.500px; flex: none; }
.bar.hd { height: 2px; background: #333; }
.bar.red { background: #e88; }
.bar.lt { background: #c4c4c4; margin-bottom: 3px; }
.bar.tight { margin-bottom: 2.500px; }
.bar.gp { margin-bottom: 8px; }
.bar.wide { margin-bottom: 5px; }
.w15 { width: 15%; } .w25 { width: 25%; } .w35 { width: 35%; } .w40 { width: 40%; } .w50 { width: 50%; } .w55 { width: 55%; } .w70 { width: 70%; } .w75 { width: 75%; } .w80 { width: 80%; } .w90 { width: 90%; }
.bar.w20, .tb.w20 { width: 20%; }
.bar.w30 { width: 30%; }
.ml8 { margin-left: 10px; } .ml12 { margin-left: 14px; } .ml14 { margin-left: 17px; }
.mt2 { margin-top: 2px; } .mt4 { margin-top: 3px; }
.teal { width: 105px; height: 24px; margin: 9px 0 0 9px; background: linear-gradient(#0d7d68, #0a5a4d); border: 1px solid #d8b86a; display: flex; flex-direction: column; align-items: center; justify-content: center; gap: 3px; box-shadow: 0 2px 3px #bbb; flex: none; }
.t31 { margin-top: 12px; height: 25px; }
.tb { height: 1.500px; background: #b9dcd2; display: block; }
.tbl-head { display: block; height: 4px; background: #c8c8c8; margin: 3px 8px 4px 9px; flex: none; }
.mini { position: relative; flex: 1; }
.thumb .mini { margin-top: -2px; }
.m { position: absolute; background: #7ab648; border: 1px solid #659a3d; }
.m1 { left: 27px; top: 1px; width: 31px; height: 15px; }
.m2 { left: 27px; top: 21px; width: 31px; height: 4px; }
.m3 { left: 27px; top: 30px; width: 31px; height: 9px; }
.m4 { left: 10px; top: 45px; width: 31px; height: 5px; }
.m5 { left: 45px; top: 45px; width: 31px; height: 9px; }
.mt-l { position: absolute; left: 85px; height: 1.500px; background: #666; }
.l1 { top: 19px; width: 30px; } .l2 { top: 25px; width: 30px; } .l3 { top: 31px; width: 11px; }
.gtable { margin: 5px 0 0 14px; width: 92px; height: 40px; background: #d9e8c5; border: 1px solid #a9c587; padding: 2px 3px; display: flex; flex-direction: column; gap: 2.800px; flex: none; }
.gtable .bar { margin: 0; height: 1.500px; background: #555; }
.pscroll { width: 18px; padding-top: 7px; display: flex; flex-direction: column; flex: none; height: 735px; }
.sbtn { height: 17px; background: #fff; border: 1px solid #cfcfcf; display: flex; align-items: center; justify-content: center; color: #666; flex: none; }
.ptrack { height: 694px; background: #dcdcdc; flex: none; }
.pthumb { display: block; height: 125px; margin-top: 377px; background: #fff; border: 1px solid #c8c8c8; }
.main { flex: 1; display: flex; flex-direction: column; min-width: 0; }
.editor { height: 683px; display: flex; flex: none; }
.canvas { flex: 1; padding: 20px 0 0 208px; min-width: 0; }
.vscroll { width: 18px; margin-right: 3px; padding-top: 7px; display: flex; flex-direction: column; flex: none; }
.vtrack { height: 568px; background: #dcdcdc; flex: none; }
.vthumb { display: block; height: 22px; margin-top: 372px; background: #fff; border: 1px solid #c8c8c8; }
.pgbtn { height: 24px; display: flex; align-items: center; justify-content: center; color: #666; flex: none; }
.dbl { width: 12px; height: 14px; }

/* slide */
.slide { width: 1143px; height: 642px; background: #fff; border: 1px solid #d0d0d0; position: relative; display: flex; flex-direction: column; }
.slide-head { height: 55px; border-bottom: 4px solid #0f7a63; display: flex; align-items: center; padding-left: 5px; flex: none; }
.diamonds { margin-top: -2px; }
.slide-title { font: 700 32px/50px "Open Sans", "Noto Sans CJK SC", sans-serif; color: #1a1a1a; margin: 3px 0 0 31px; letter-spacing: -.3px; }
.brand { margin-left: auto; display: flex; align-items: center; padding-right: 23px; }
.brand-mark { width: 30px; height: 32px; }
.brand-name { font: 600 26px/32px "Noto Sans CJK SC", sans-serif; color: #1c7c66; margin-left: 4px; letter-spacing: 2.500px; }
.slide-body { flex: 1; display: flex; padding: 29px 0 0 67px; }
.diagram { width: 658px; height: 524px; position: relative; flex: none; background-color: #fbfbfb;
  background-image: linear-gradient(#eeeeee 1px, transparent 1px), linear-gradient(90deg, #eeeeee 1px, transparent 1px), linear-gradient(#f5f5f5 1px, transparent 1px), linear-gradient(90deg, #f5f5f5 1px, transparent 1px);
  background-size: 60px 60px, 60px 60px, 12px 12px, 12px 12px; }
.node { position: absolute; background: #7ab648; border: 2px solid #4e7a37; color: #173f14; font: 400 17.200px/24px Lato, "Open Sans", sans-serif; }
.n-abs { left: 180px; top: 7px; width: 294px; height: 152px; }
.n-sec { left: 180px; top: 206px; width: 294px; height: 40px; }
.n-url { left: 180px; top: 293px; width: 294px; height: 81px; }
.n-ext { left: 18px; top: 431px; width: 293px; height: 40px; }
.n-app { left: 358px; top: 431px; width: 294px; height: 81px; }
.nhead { height: 100%; display: flex; align-items: center; justify-content: center; padding-bottom: 4px; position: relative; z-index: 2; }
.nhead.h41 { height: 39px; border-bottom: 2px solid #3f7a2a; }
.nbody { padding: 6px 6px 0; position: relative; z-index: 2; }
.nbody.one { padding-top: 6px; }
.links { position: absolute; left: 0; top: 0; }
.hilite { position: absolute; left: 356px; top: 15px; width: 66px; height: 66px; border-radius: 50%; z-index: 1; background: radial-gradient(circle, #aed400 0 35%, #a4ce10c0 62%, #a4ce1000 100%); }
.cursor { position: absolute; left: 374px; top: 30px; z-index: 3; }
.slide-text { margin: 159px 0 0 75px; color: #333; font: 300 28px/50px "Noto Sans CJK SC", sans-serif; white-space: nowrap; }
.tline { height: 50px; line-height: 50px; }
.mono { font: 400 28.300px/50px "Liberation Mono", monospace; }
.watermark { position: absolute; right: 30px; bottom: 16px; font: italic 500 23px/30px "Noto Sans CJK SC", sans-serif; letter-spacing: 1.700px; color: #e8e8e8; }

/* notes + status */
.notes { height: 57px; margin-left: 1px; border-top: 1px solid #d2d2d2; padding: 8px 0 0 15px; font-size: 19.200px; line-height: 27px; color: #666; flex: none; }
.status { height: 28px; flex: none; background: #f0f0f0; border-top: 1px solid #d6d6d6; display: flex; align-items: center; font-size: 16px; color: #555; padding-left: 11px; position: relative; overflow: hidden; }
.st-count { width: 213px; white-space: nowrap; font-size: 16px; word-spacing: 1px; padding-bottom: 3px; }
.st-book { width: 20px; height: 20px; }
.st-lang { margin-left: 23px; padding-bottom: 3px; }
.st-right { margin-left: auto; display: flex; align-items: center; height: 100%; }
.st-btn { display: flex; align-items: center; gap: 5px; padding-bottom: 3px; }
.st-notes { width: 78px; }
.st-comm { width: 78px; }
.st-ic { width: 15px; height: 15px; }
.vw { width: 49.500px; height: 100%; display: flex; align-items: center; justify-content: center; }
.vw.active { background: #c8c8c8; }
.vw-ic { width: 18px; height: 18px; }
.zm { width: 22px; text-align: center; font-size: 20px; font-weight: 600; line-height: 20px; color: #666; padding-bottom: 3px; }
.slider { width: 118px; height: 14px; background: linear-gradient(#aaa, #aaa) center / 100% 1px no-repeat; display: flex; align-items: center; }
.knob { display: block; width: 5px; height: 16px; background: #666; margin-left: 56px; flex: none; }
.plus { width: 42px; }
.zoomv { width: 42px; text-align: center; font-size: 15px; padding-bottom: 3px; }
.fit { width: 18px; height: 18px; margin: 0 9px 0 13px; }
.click-ring { position: absolute; left: 20px; top: 21px; width: 34px; height: 34px; border: 1.500px solid #6f9bd0; border-radius: 50%; }
```
